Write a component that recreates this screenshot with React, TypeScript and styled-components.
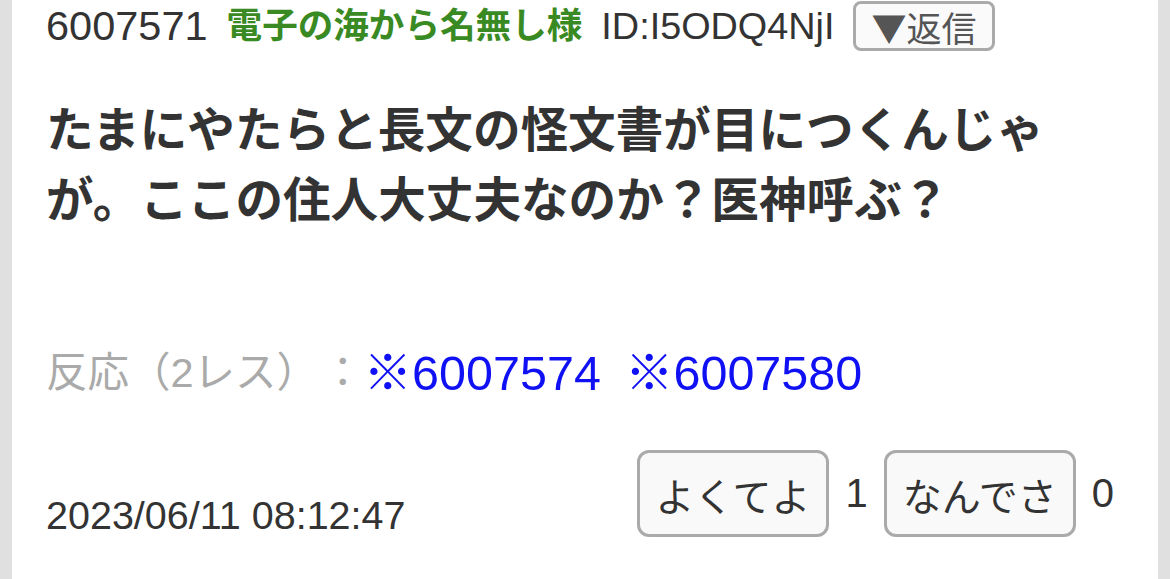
import React from 'react';
import styled, { createGlobalStyle } from 'styled-components';

const GlobalStyle = createGlobalStyle`
  html, body {
    margin: 0;
    padding: 0;
    background: #e0e0e0;
  }
  body {
    font-family: "Liberation Sans", "Noto Sans CJK JP", sans-serif;
    color: #333;
  }
`;

const Page = styled.div`
  padding: 0 12px;
  height: 579px;
  box-sizing: border-box;
`;

const Post = styled.article`
  background: #fff;
  height: 100%;
  padding: 0 44px 0 34px;
  box-sizing: border-box;
`;

const Header = styled.header`
  display: flex;
  align-items: center;
  gap: 19px;
  height: 52px;
  line-height: 52px;
  white-space: nowrap;
`;

const Num = styled.span`
  font-size: 41.5px;
  color: #333;
`;

const Name = styled.span`
  font-size: 35.6px;
  color: #3a8a24;
  font-weight: 700;
`;

const Id = styled.span`
  font-size: 37.8px;
  color: #333;
`;

const ReplyButton = styled.button`
  height: 50px;
  padding: 0 15px;
  border: 3px solid #aaa;
  border-radius: 8px;
  background: #fafafa;
  color: #555;
  font-family: "Noto Sans CJK JP", sans-serif;
  font-size: 35px;
  line-height: 1;
  display: flex;
  align-items: center;
`;

const Body = styled.p`
  margin: 44px 40px 0 0;
  font-size: 47.6px;
  line-height: 70px;
  font-weight: 700;
  color: #333;
`;

const Replies = styled.div`
  margin-top: 103px;
  display: flex;
  align-items: center;
  height: 60px;
  font-size: 41.5px;
  color: #aaa;
  white-space: nowrap;
`;

const Colon = styled.span`
  margin: 0 0 0 4px;
`;

const Anchor = styled.a`
  color: #1010f5;
  text-decoration: none;
  font-size: 48.5px;
  margin-right: 24px;
`;

const Footer = styled.footer`
  margin-top: 51px;
  display: flex;
  justify-content: space-between;
  align-items: flex-end;
`;

const Date = styled.span`
  font-size: 39.5px;
  line-height: 44px;
  color: #333;
`;

const Votes = styled.div`
  display: flex;
  align-items: center;
  gap: 16px;
`;

const VoteButton = styled.button`
  height: 87px;
  padding: 0 16px;
  border: 3px solid #aaa;
  border-radius: 12px;
  background: #f9f9f9;
  color: #333;
  font-family: inherit;
  font-size: 39px;
`;

const Count = styled.span`
  font-size: 40px;
  color: #333;
  min-width: 22px;
`;

export default function App() {
  return (
    <>
      <GlobalStyle />
      <Page>
        <Post>
          <Header>
            <Num>6007571</Num>
            <Name>電子の海から名無し様</Name>
            <Id>ID:I5ODQ4NjI</Id>
            <ReplyButton>▼返信</ReplyButton>
          </Header>
          <Body>
            たまにやたらと長文の怪文書が目につくんじゃが。ここの住人大丈夫なのか？医神呼ぶ？
          </Body>
          <Replies>
            反応（2レス）<Colon>：</Colon>
            <Anchor href="#">※6007574</Anchor>
            <Anchor href="#">※6007580</Anchor>
          </Replies>
          <Footer>
            <Date>2023/06/11 08:12:47</Date>
            <Votes>
              <VoteButton>よくてよ</VoteButton>
              <Count>1</Count>
              <VoteButton>なんでさ</VoteButton>
              <Count>0</Count>
            </Votes>
          </Footer>
        </Post>
      </Page>
    </>
  );
}
